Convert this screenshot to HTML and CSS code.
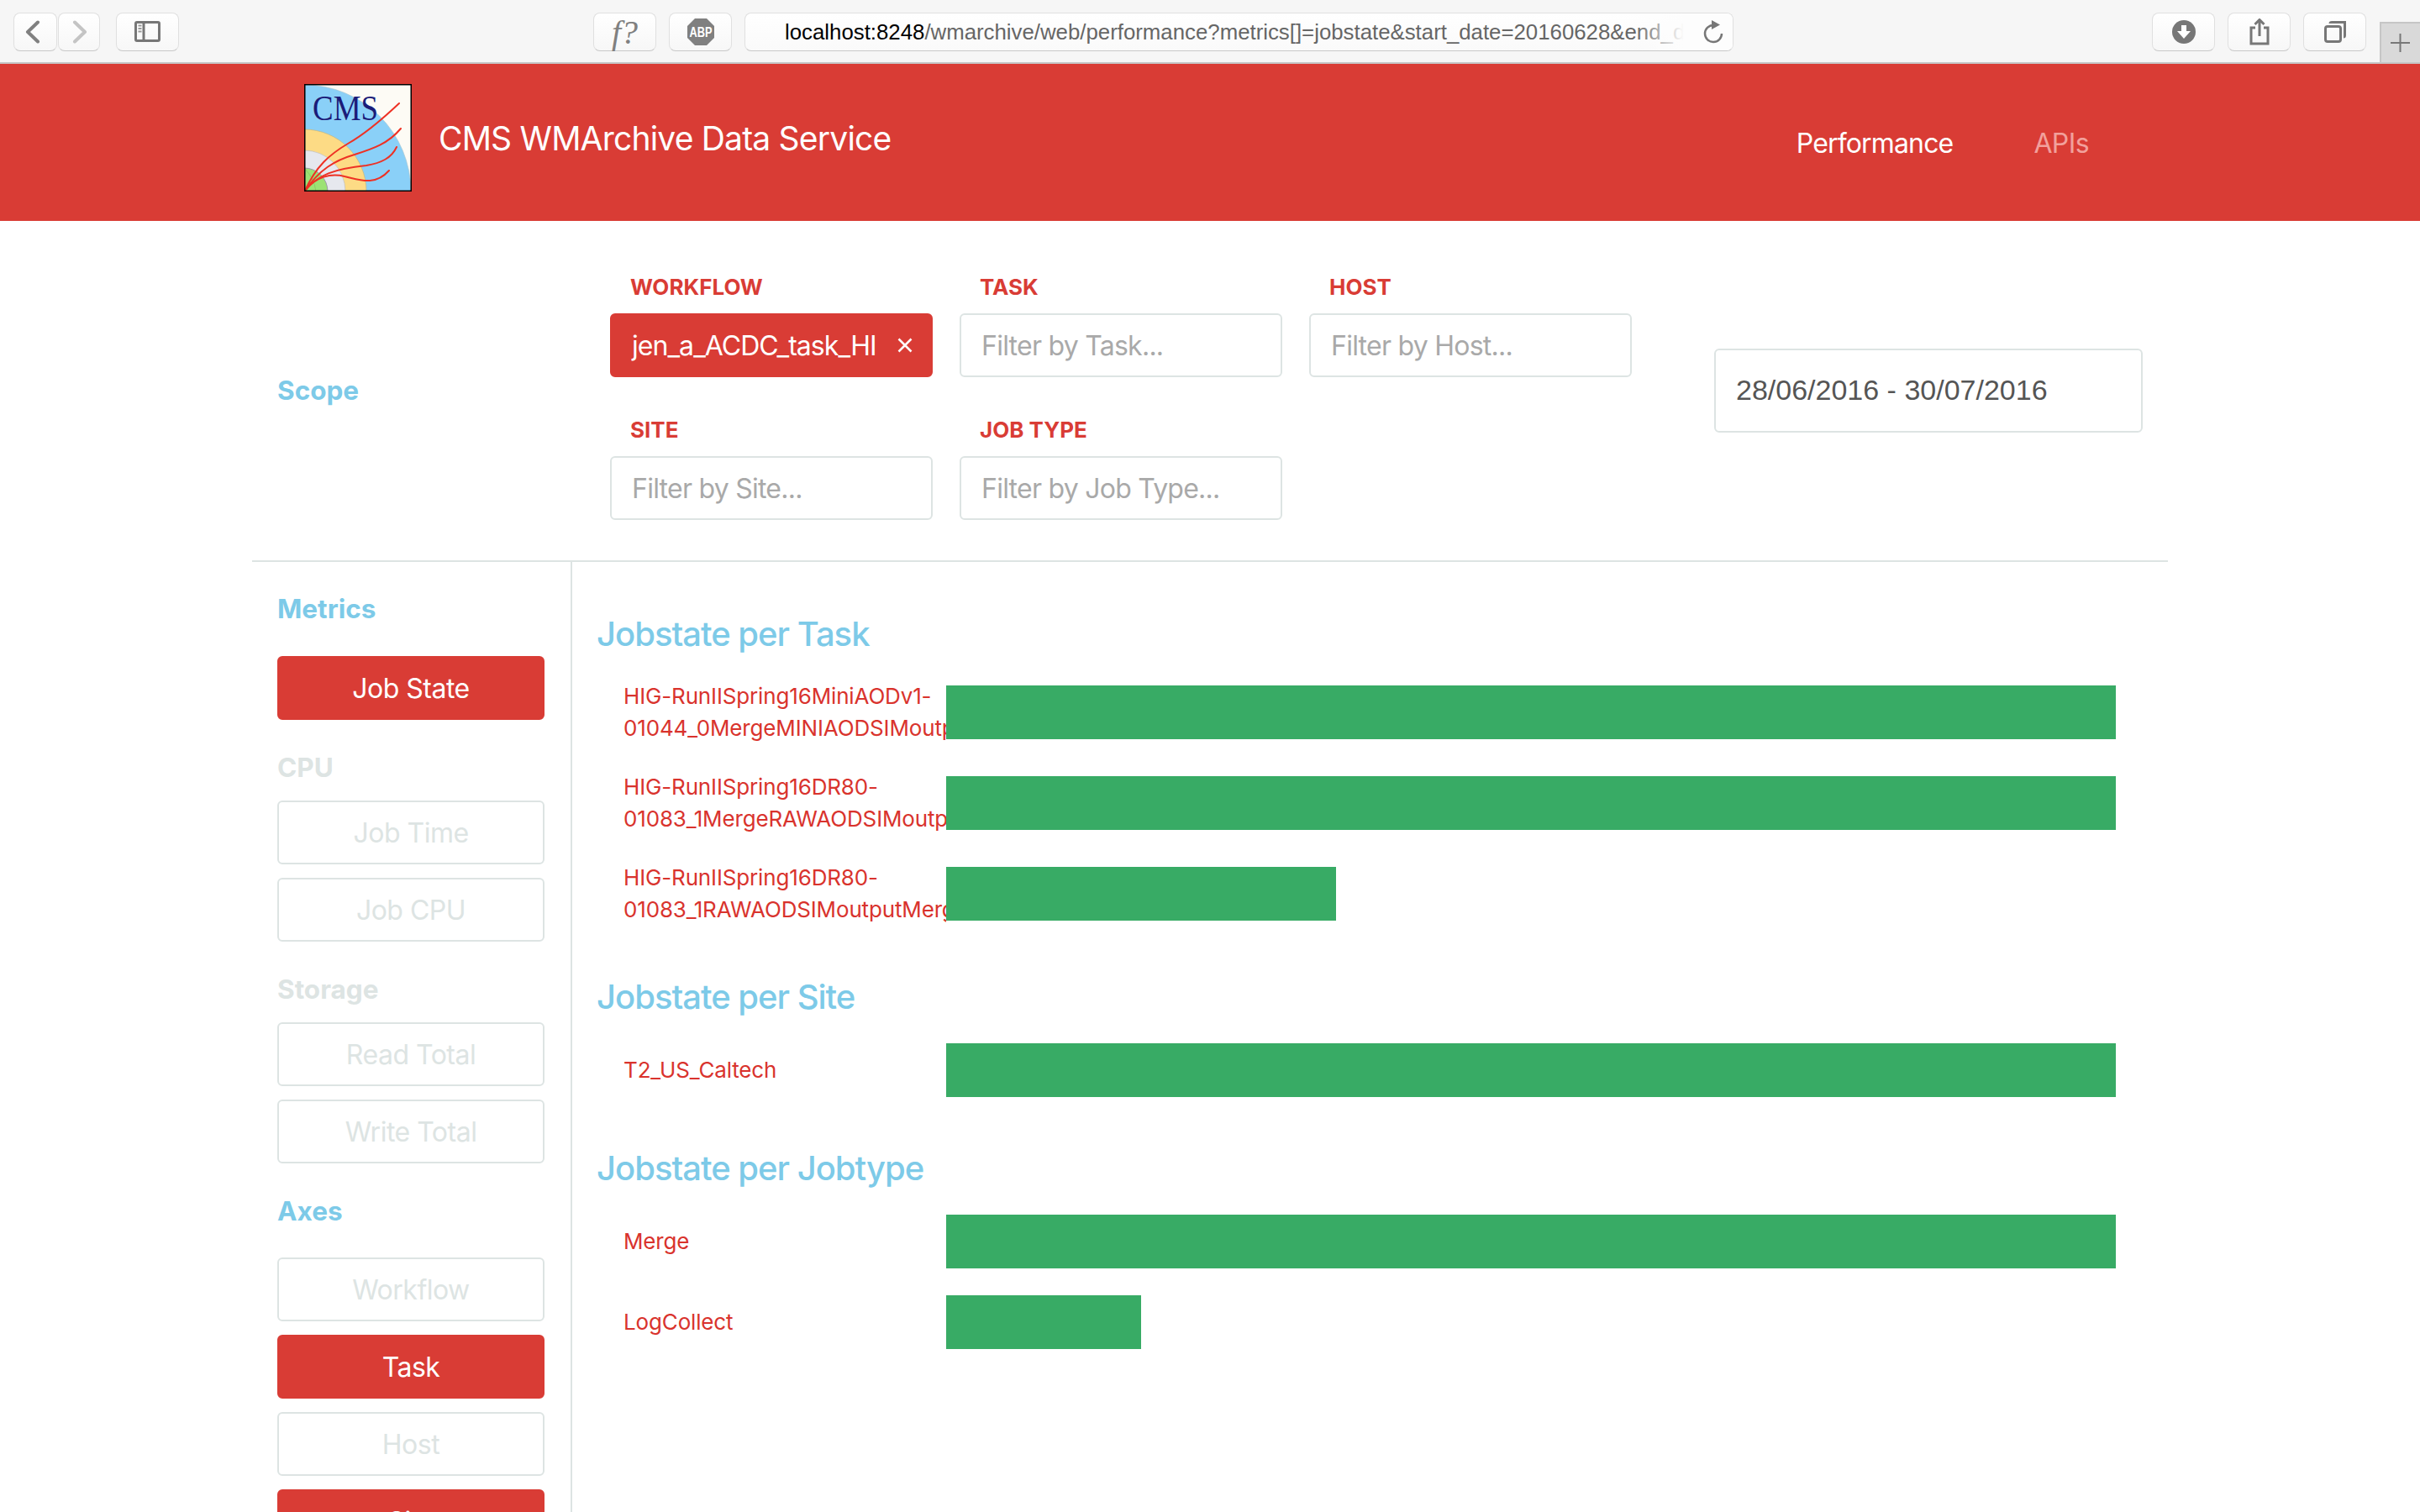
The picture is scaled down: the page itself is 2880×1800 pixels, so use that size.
FILE: index.html
```html
<!DOCTYPE html>
<html lang="en">
<head>
<meta charset="utf-8">
<title>CMS WMArchive Data Service</title>
<link rel="stylesheet" href="styles.css">
</head>
<body>
<div class="toolbar">
  <div class="tb-btn tb-nav"><svg width="26" height="28" viewBox="0 0 26 28"><path d="M16 2.500 L4 14 L16 25.500" class="ic ic-wide"/></svg></div>
  <div class="tb-btn tb-nav tb-fwd"><svg width="26" height="28" viewBox="0 0 26 28"><path d="M8 2.500 L20 14 L8 25.500" class="ic ic-wide ic-dim"/></svg></div>
  <div class="tb-btn tb-wide tb-side"><svg width="32" height="26" viewBox="0 0 32 26"><rect x="1.5" y="1.5" width="28" height="22" rx="1.5" class="ic"/><path d="M11 1.5 V23.5" class="ic"/><path d="M4.5 5.5 H8.5 M4.5 9 H8.5 M4.5 12.5 H8.5" class="ic ic-thin"/></svg></div>
  <div class="tb-btn tb-wide tb-f"><span class="f-glyph">f?</span></div>
  <div class="tb-btn tb-wide tb-abp"><svg width="34" height="34" viewBox="0 0 34 34"><path d="M10 1 H24 L33 10 V24 L24 33 H10 L1 24 V10 Z" fill="#808080"/><text x="3.500" y="23" textLength="27" lengthAdjust="spacingAndGlyphs" class="abp-text">ABP</text></svg></div>
  <div class="tb-url">
    <span class="url-text"><span class="url-host">localhost:8248</span>/wmarchive/web/performance?metrics[]=jobstate&amp;start_date=20160628&amp;end_date</span>
    <span class="url-fade"></span>
    <svg class="url-reload" width="24" height="28" viewBox="0 0 24 28"><path d="M12 6 A10 10 0 1 0 22 16" class="ic ic-reload"/><path d="M10 0 L20 5.500 L10 11 Z" fill="#777"/></svg>
  </div>
  <div class="tb-btn tb-wide tb-dl"><svg width="28" height="28" viewBox="0 0 28 28"><circle cx="14" cy="14" r="14" fill="#777"/><path d="M11 6 H17 V13 H22 L14 22 L6 13 H11 Z" fill="#fff"/></svg></div>
  <div class="tb-btn tb-wide tb-next"><svg width="24" height="32" viewBox="0 0 24 32"><path d="M7 11 H2 V30 H22 V11 H17" class="ic"/><path d="M12 21 V2 M6.5 7 L12 1.5 L17.5 7" class="ic"/></svg></div>
  <div class="tb-btn tb-wide tb-next"><svg width="26" height="26" viewBox="0 0 26 26"><rect x="1.5" y="6.5" width="18" height="18" rx="2.5" class="ic"/><path d="M7 3 Q7 1.5 9 1.5 H24.5 V17 Q24.5 19 23 19" class="ic"/></svg></div>
  <div class="tb-plus"><svg width="24" height="24" viewBox="0 0 24 24"><path d="M0 12 H23 M11.500 1 V23" class="ic ic-plus"/></svg></div>
</div>

<header class="topbar">
  <svg class="logo" width="128" height="128" viewBox="0 0 128 128">
    <rect width="128" height="128" fill="#fdfbf5"/>
    <circle cx="0" cy="128" r="127" fill="#8ad0f8" stroke="#a8c4cc" stroke-width="0.6"/>
    <circle cx="0" cy="128" r="74" fill="#fddb85" stroke="#c8b070" stroke-width="0.6"/>
    <circle cx="0" cy="128" r="49" fill="#e6e8ee" stroke="#b8b8b8" stroke-width="0.6"/>
    <circle cx="0" cy="128" r="28" fill="#9ce274" stroke="#9a98a8" stroke-width="1"/>
    <path d="M0 128 A14 14 0 0 0 14 128 M0 100 Q12 112 14 128" fill="none" stroke="#80b860" stroke-width="0.6"/>
    <text x="10" y="43" textLength="78" lengthAdjust="spacingAndGlyphs" class="logo-text">CMS</text>
    <g class="tracks">
      <path d="M1 127 C14 98 30 84 52 71 C75 58 95 40 113 23"/>
      <path d="M1 127 C18 102 36 91 60 84 C82 77 100 71 115 53"/>
      <path d="M1 127 C16 108 36 101 74 97 C92 94 104 88 110 75"/>
      <path d="M1 127 C14 110 32 106 48 110 C66 114 84 122 101 103"/>
    </g>
    <rect x="0.75" y="0.75" width="126.5" height="126.5" fill="none" stroke="#000" stroke-width="1.5"/>
  </svg>
  <div class="brand">CMS WMArchive Data Service</div>
  <nav class="nav">
    <a class="nav-link">Performance</a>
    <a class="nav-link nav-dim">APIs</a>
  </nav>
</header>

<div class="page">
  <section class="scope">
    <div class="scope-title"><h3 class="side-head">Scope</h3></div>
    <div class="filters">
      <div class="field">
        <div class="field-label">WORKFLOW</div>
        <div class="input chip"><span>jen_a_ACDC_task_HI</span><svg width="20" height="20" viewBox="0 0 20 20"><path d="M2.500 2.500 L17.500 17.500 M17.500 2.500 L2.500 17.500" class="chip-x"/></svg></div>
      </div>
      <div class="field">
        <div class="field-label">TASK</div>
        <div class="input">Filter by Task...</div>
      </div>
      <div class="field">
        <div class="field-label">HOST</div>
        <div class="input">Filter by Host...</div>
      </div>
      <div class="field">
        <div class="field-label">SITE</div>
        <div class="input">Filter by Site...</div>
      </div>
      <div class="field">
        <div class="field-label">JOB TYPE</div>
        <div class="input">Filter by Job Type...</div>
      </div>
    </div>
    <div class="dates">28/06/2016 - 30/07/2016</div>
  </section>

  <div class="columns">
    <aside class="sidebar">
      <h3 class="side-head head-big">Metrics</h3>
      <div class="btn btn-on">Job State</div>
      <h3 class="side-head head-off">CPU</h3>
      <div class="btn">Job Time</div>
      <div class="btn">Job CPU</div>
      <h3 class="side-head head-off">Storage</h3>
      <div class="btn">Read Total</div>
      <div class="btn">Write Total</div>
      <h3 class="side-head head-big">Axes</h3>
      <div class="btn">Workflow</div>
      <div class="btn btn-on">Task</div>
      <div class="btn">Host</div>
      <div class="btn btn-on">Site</div>
    </aside>
    <main class="charts">
      <section class="chart">
        <h2 class="chart-title">Jobstate per Task</h2>
        <div class="row"><div class="row-label">HIG-RunIISpring16MiniAODv1-01044_0MergeMINIAODSIMoutput</div><div class="track"><div class="fill" style="width:100%"></div></div></div>
        <div class="row"><div class="row-label">HIG-RunIISpring16DR80-01083_1MergeRAWAODSIMoutput</div><div class="track"><div class="fill" style="width:100%"></div></div></div>
        <div class="row"><div class="row-label">HIG-RunIISpring16DR80-01083_1RAWAODSIMoutputMerged</div><div class="track"><div class="fill" style="width:33.3%"></div></div></div>
      </section>
      <section class="chart">
        <h2 class="chart-title">Jobstate per Site</h2>
        <div class="row"><div class="row-label">T2_US_Caltech</div><div class="track"><div class="fill" style="width:100%"></div></div></div>
      </section>
      <section class="chart">
        <h2 class="chart-title">Jobstate per Jobtype</h2>
        <div class="row"><div class="row-label">Merge</div><div class="track"><div class="fill" style="width:100%"></div></div></div>
        <div class="row"><div class="row-label">LogCollect</div><div class="track"><div class="fill" style="width:16.7%"></div></div></div>
      </section>
    </main>
  </div>
</div>
</body>
</html>
```
FILE: styles.css
```css
* { box-sizing: border-box; }
html, body { margin: 0; height: 1800px; overflow: hidden; background: #fff; }
body { font-family: Inter, "Liberation Sans", Arial, sans-serif; color: #555; }

/* browser toolbar */
.toolbar { display: flex; align-items: flex-start; height: 76px; padding: 15px 0 0 16px; background: #f6f6f6; border-bottom: 2px solid #c6c6c6; font-family: "Liberation Sans", Arial, sans-serif; }
.tb-btn, .tb-url { height: 46px; border: 1px solid #e0e0e0; border-bottom-color: #c8c8c8; border-radius: 8px; background: linear-gradient(#fff, #f7f7f7); }
.tb-btn { display: flex; align-items: center; justify-content: center; flex: none; }
.tb-nav { width: 52px; }
.tb-fwd { width: 50px; margin-left: 1px; }
.tb-wide { width: 75px; }
.tb-side { margin-left: 19px; }
.tb-f { margin-left: 493px; }
.tb-abp { margin-left: 15px; }
.tb-url { position: relative; display: flex; align-items: center; width: 1178px; margin-left: 15px; padding-left: 47px; background: linear-gradient(#fff, #fafafa); overflow: hidden; }
.tb-dl { margin-left: 498px; }
.tb-next { margin-left: 15px; }
.tb-plus { display: flex; align-items: center; justify-content: center; width: 48px; height: 48px; margin: 11px 0 0 16px; background: #d9d9d9; border-top: 2px solid #c6c6c6; border-left: 2px solid #c6c6c6; }
.ic { fill: none; stroke: #777; stroke-width: 3; }
.ic-wide { stroke: #808080; stroke-width: 4; stroke-linecap: round; stroke-linejoin: round; }
.ic-dim { stroke: #c4c4c4; }
.ic-thin { stroke: #999; stroke-width: 2; }
.ic-plus { stroke-width: 2; }
.ic-reload { stroke-width: 2.500; }
.f-glyph { font: italic 40px "Liberation Serif", serif; color: #808080; }
.abp-text { font: bold 16.500px "Liberation Sans", sans-serif; fill: #fff; }
.url-text { font-size: 25.800px; color: #666; white-space: nowrap; }
.url-host { color: #000; }
.url-fade { position: absolute; top: 0; right: 0; bottom: 0; width: 116px; background: linear-gradient(90deg, rgba(253,253,253,0) 0, #fdfdfd 50%, #fdfdfd 100%); }
.url-reload { position: absolute; right: 11px; top: 7.500px; }

/* site header */
.topbar { display: flex; align-items: flex-start; height: 187px; padding-left: 362px; background: #d93c35; color: #fff; }
.logo { flex: none; margin-top: 24px; }
.logo-text { font: 42px "Liberation Serif", serif; fill: #1b1b78; }
.tracks path { fill: none; stroke: #ee3124; stroke-width: 2; stroke-linecap: round; }
.brand { margin: 65px 0 0 32px; font-size: 39px; line-height: 48px; letter-spacing: -0.800px; }
.nav { display: flex; gap: 96px; margin: 71px 0 0 auto; padding-right: 394px; }
.nav-link { font-size: 32px; line-height: 48px; letter-spacing: -0.850px; color: #fff; }
.nav-dim { color: #f2a09c; letter-spacing: -0.600px; }

/* page */
.page { width: 2280px; margin: 0 auto; }
.scope { display: flex; height: 406px; padding: 64px 0 49px 30px; border-bottom: 2px solid #dde4e3; }
.scope-title { width: 396px; flex: none; align-self: center; margin-bottom: 16px; }
.side-head { margin: 0; font-size: 31.500px; line-height: 40px; font-weight: 700; color: #7dcae8; }
.filters { display: grid; grid-template-columns: repeat(3, 384px); column-gap: 32px; row-gap: 48px; width: 1216px; flex: none; align-content: start; }
.field-label { height: 30px; margin: 0 0 16px 24px; font-size: 26px; line-height: 30px; font-weight: 700; color: #d93c35; }
.input { display: flex; align-items: center; justify-content: space-between; height: 76px; padding: 0 21px 0 24px; border: 2px solid #dde4e3; border-radius: 6px; font-size: 32px; letter-spacing: -0.750px; color: #a9a9a9; background: #fff; }
.chip { border-color: #d93c35; background: #d93c35; color: #fff; letter-spacing: -0.950px; }
.chip-x { fill: none; stroke: #fff; stroke-width: 2.500; }
.dates { display: flex; align-items: center; width: 510px; height: 100px; margin-left: 98px; padding-left: 24px; align-self: center; margin-bottom: 16px; border: 2px solid #dde4e3; border-radius: 6px; font-family: "Liberation Sans", Arial, sans-serif; font-size: 34px; color: #555; flex: none; }

.columns { display: flex; align-items: stretch; height: 1200px; }
.sidebar { width: 381px; flex: none; padding: 36px 30px 0; border-right: 2px solid #dde4e3; }
.head-big { margin-bottom: 36px; }
.head-off { margin: 37px 0 19px; color: #dde4e3; }
.btn { display: flex; align-items: center; justify-content: center; width: 318px; height: 76px; margin-bottom: 16px; border: 2px solid #dde4e3; border-radius: 6px; font-size: 32px; letter-spacing: -0.500px; color: #dde4e3; background: #fff; }
.btn + .head-big, .btn + .head-off { margin-top: 37px; }
.btn + .head-big { margin-bottom: 35px; }
.btn-on { border-color: #d93c35; background: #d93c35; color: #fff; }

.charts { flex: 1; padding: 33px 62px 0 29px; }
.chart { padding-top: 29px; }
.chart-title { margin: 0 0 31px; font-size: 40px; line-height: 48px; font-weight: 500; letter-spacing: -1px; color: #7dcae8; }
.row { display: flex; align-items: center; margin: 0 0 32px 32px; }
.row-label { width: 384px; flex: none; overflow: hidden; font-size: 26px; line-height: 38px; letter-spacing: -0.150px; color: #d9332d; }
.track { flex: 1; height: 64px; }
.fill { height: 100%; background: #38ab65; }
```
